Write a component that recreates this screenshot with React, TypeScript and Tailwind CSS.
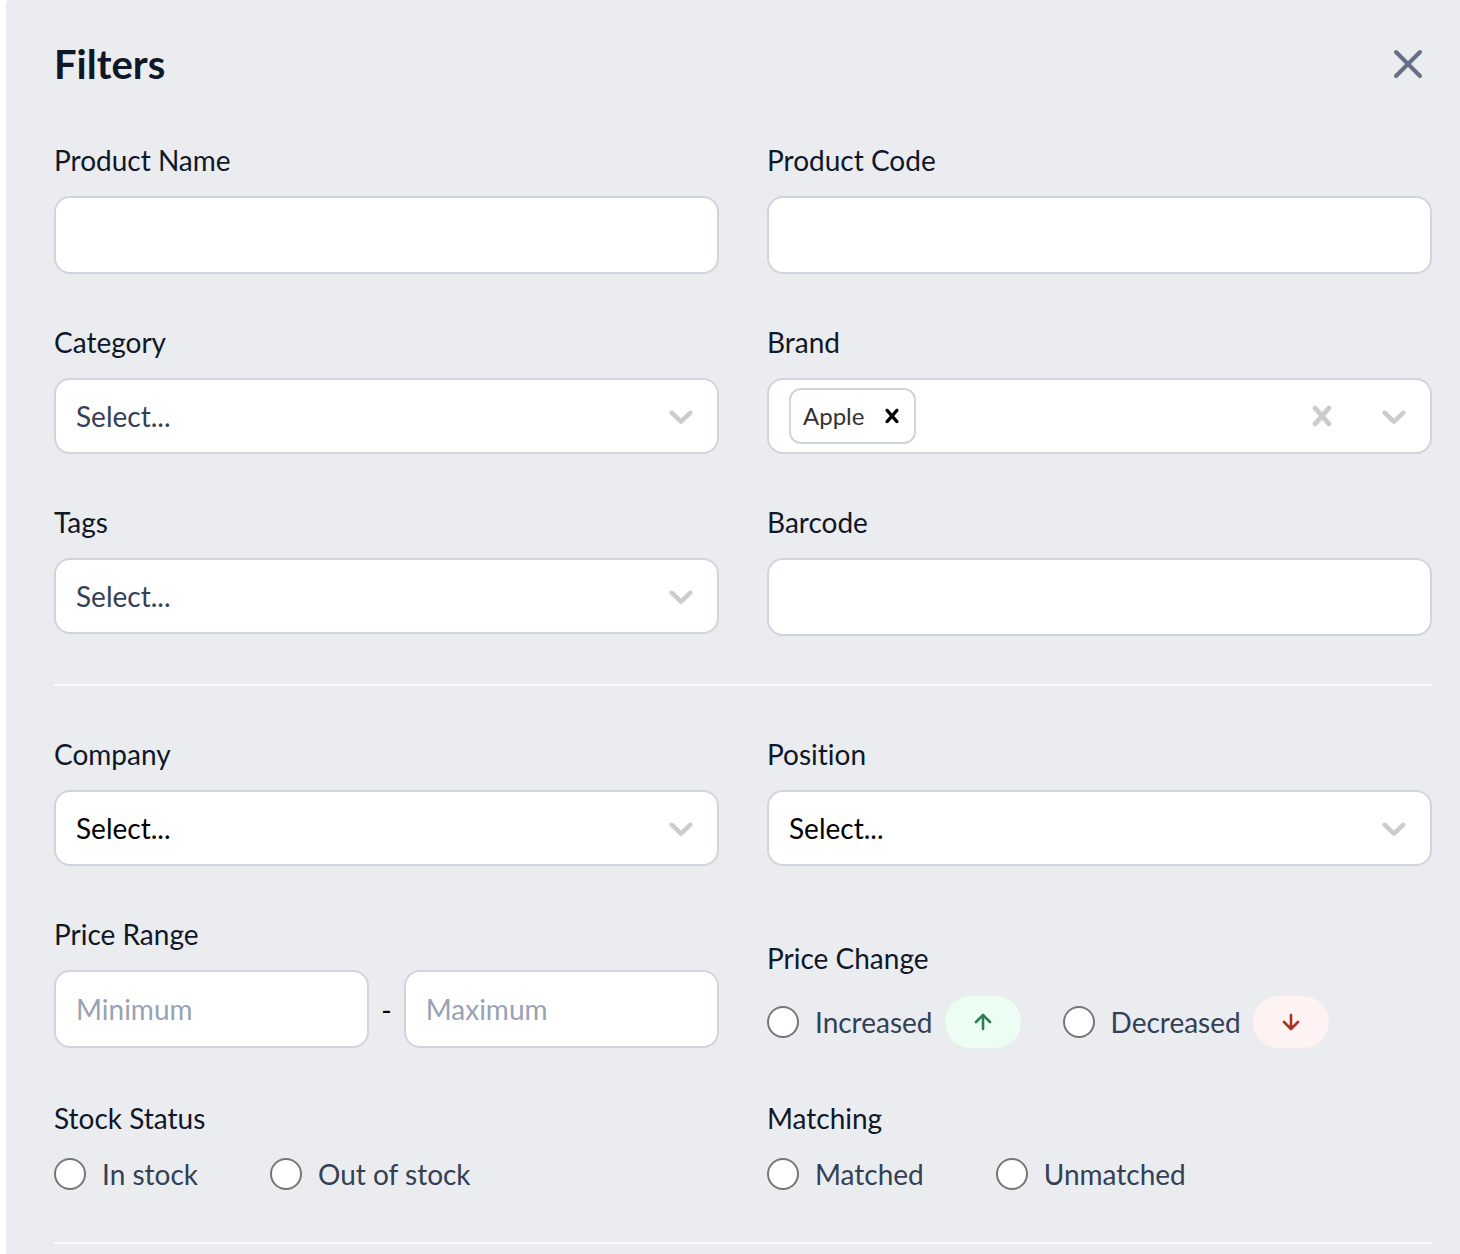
import React, { useState } from 'react';
import { X } from 'lucide-react';
import { clsx } from 'clsx';

const controlClass = 'w-full min-w-0 rounded-2xl border-2 border-[#d0d5dd] bg-white text-[28px] leading-10 outline-none focus:border-[#98a2b3]';

function ChevronIcon({ className }: { className?: string }) {
  return (
    <svg viewBox="0 0 20 20" fill="currentColor" aria-hidden="true" className={clsx('h-10 w-10 text-[#cccccc]', className)}>
      <path d="M4.516 7.548c0.436-0.446 1.043-0.481 1.576 0l3.908 3.747 3.908-3.747c0.533-0.481 1.141-0.446 1.574 0 0.436 0.445 0.408 1.197 0 1.615-0.406 0.418-4.695 4.502-4.695 4.502-0.217 0.223-0.502 0.335-0.787 0.335s-0.57-0.112-0.789-0.335c0 0-4.287-4.084-4.695-4.502s-0.436-1.17 0-1.615z" />
    </svg>
  );
}

function CrossIcon({ className }: { className?: string }) {
  return (
    <svg viewBox="0 0 20 20" fill="currentColor" aria-hidden="true" className={className}>
      <path d="M14.348 14.849c-0.469 0.469-1.229 0.469-1.697 0l-2.651-3.030-2.651 3.029c-0.469 0.469-1.229 0.469-1.697 0-0.469-0.469-0.469-1.229 0-1.697l2.758-3.15-2.759-3.152c-0.469-0.469-0.469-1.228 0-1.697s1.228-0.469 1.697 0l2.652 3.031 2.651-3.031c0.469-0.469 1.228-0.469 1.697 0s0.469 1.229 0 1.697l-2.758 3.152 2.758 3.15c0.469 0.469 0.469 1.229 0 1.698z" />
    </svg>
  );
}

function ArrowIcon({ down }: { down?: boolean }) {
  return (
    <svg viewBox="0 0 12 12" fill="none" stroke="currentColor" strokeWidth="1.3" strokeLinecap="round" strokeLinejoin="round" aria-hidden="true" className="h-6 w-6">
      <path d={down ? 'M6 2.5v7M2.5 6L6 9.5L9.5 6' : 'M6 9.5v-7M2.5 6L6 2.5L9.5 6'} />
    </svg>
  );
}

function TextField({ id, label }: { id: string; label: string }) {
  return (
    <div className="flex flex-col gap-4">
      <label htmlFor={id}>{label}</label>
      <input id={id} type="text" className={clsx(controlClass, 'h-[78px] px-5')} />
    </div>
  );
}

function SelectField({ id, label, dark }: { id: string; label: string; dark?: boolean }) {
  return (
    <div className="flex flex-col gap-4">
      <label htmlFor={id}>{label}</label>
      <div className="relative">
        <select
          id={id}
          className={clsx(controlClass, 'block h-[76px] appearance-none pl-5 pr-16', dark ? 'text-black' : 'text-[#344054]')}
        >
          <option>Select...</option>
        </select>
        <ChevronIcon className="pointer-events-none absolute inset-y-0 right-[18px] my-auto" />
      </div>
    </div>
  );
}

function BrandField() {
  const [brands, setBrands] = useState(['Apple']);

  return (
    <div className="flex flex-col gap-4">
      <label htmlFor="brand">Brand</label>
      <div className="flex h-[76px] items-center gap-2 rounded-2xl border-2 border-[#d0d5dd] bg-white pl-5 pr-4">
        {brands.map((brand) => (
          <span key={brand} className="flex h-14 items-center gap-3.5 rounded-xl border-2 border-[#d0d5dd] pl-3 pr-2 text-2xl text-[#333333]">
            {brand}
            <button type="button" aria-label={`Remove ${brand}`} onClick={() => setBrands(brands.filter((b) => b !== brand))}>
              <CrossIcon className="h-7 w-7 text-black" />
            </button>
          </span>
        ))}
        <input id="brand" type="text" role="combobox" aria-expanded="false" className="min-w-0 flex-1 bg-transparent outline-none" />
        <div className="flex items-center gap-8">
          <button type="button" aria-label="Clear brands" onClick={() => setBrands([])}>
            <CrossIcon className="h-10 w-10 text-[#cccccc]" />
          </button>
          <button type="button" aria-label="Show brands">
            <ChevronIcon />
          </button>
        </div>
      </div>
    </div>
  );
}

function Radio({ name, label, children }: { name: string; label: string; children?: React.ReactNode }) {
  return (
    <label className="flex items-center text-[#344054]">
      <input
        type="radio"
        name={name}
        className="mr-4 h-8 w-8 appearance-none rounded-full border-2 border-[#767676] bg-white checked:border-[10px] checked:border-[#344054]"
      />
      {label}
      {children}
    </label>
  );
}

export default function App() {
  return (
    <div className="min-h-screen bg-white pl-1.5 font-['Lato',sans-serif] [font-variant-ligatures:none]">
      <form className="min-h-screen rounded-tl-sm bg-[#eaecf0] pl-12 pr-7 pt-9 text-[28px] leading-10 text-[#101828]">
        <header className="mb-12 flex h-14 items-center justify-between">
          <h2 className="text-[40px] font-bold leading-14">Filters</h2>
          <button type="button" aria-label="Close filters" className="text-[#667085]">
            <X className="h-12 w-12" />
          </button>
        </header>

        {/* Product */}
        <div className="grid grid-cols-2 gap-12">
          <TextField id="product-name" label="Product Name" />
          <TextField id="product-code" label="Product Code" />
          <SelectField id="category" label="Category" />
          <BrandField />
          <SelectField id="tags" label="Tags" />
          <TextField id="barcode" label="Barcode" />
        </div>

        <hr className="my-12 border-t-2 border-[#f9fafb]" />

        {/* Market */}
        <div className="grid grid-cols-2 gap-12">
          <SelectField id="company" label="Company" dark />
          <SelectField id="position" label="Position" dark />

          <fieldset>
            <legend className="mb-4">Price Range</legend>
            <div className="flex h-20 items-start gap-3">
              <input type="text" aria-label="Minimum price" placeholder="Minimum" className={clsx(controlClass, 'h-[78px] flex-1 px-5 placeholder:text-[#98a2b3]')} />
              <span className="leading-20 text-black">-</span>
              <input type="text" aria-label="Maximum price" placeholder="Maximum" className={clsx(controlClass, 'h-[78px] flex-1 px-5 placeholder:text-[#98a2b3]')} />
            </div>
          </fieldset>

          <fieldset className="self-end">
            <legend className="mb-4">Price Change</legend>
            <div className="flex h-14 items-center gap-[42px]">
              <Radio name="price-change" label="Increased">
                <span className="ml-3 flex h-[52px] w-[76px] items-center justify-center rounded-full bg-[#ecfdf3] text-[#2f7d4f]">
                  <ArrowIcon />
                </span>
              </Radio>
              <Radio name="price-change" label="Decreased">
                <span className="ml-3 flex h-[52px] w-[76px] items-center justify-center rounded-full bg-[#fef3f2] text-[#a93226]">
                  <ArrowIcon down />
                </span>
              </Radio>
            </div>
          </fieldset>

          <fieldset>
            <legend className="mb-4">Stock Status</legend>
            <div className="flex gap-18">
              <Radio name="stock" label="In stock" />
              <Radio name="stock" label="Out of stock" />
            </div>
          </fieldset>

          <fieldset>
            <legend className="mb-4">Matching</legend>
            <div className="flex gap-18">
              <Radio name="matching" label="Matched" />
              <Radio name="matching" label="Unmatched" />
            </div>
          </fieldset>
        </div>

        <hr className="mt-12 border-t-2 border-[#f9fafb]" />
      </form>
    </div>
  );
}
